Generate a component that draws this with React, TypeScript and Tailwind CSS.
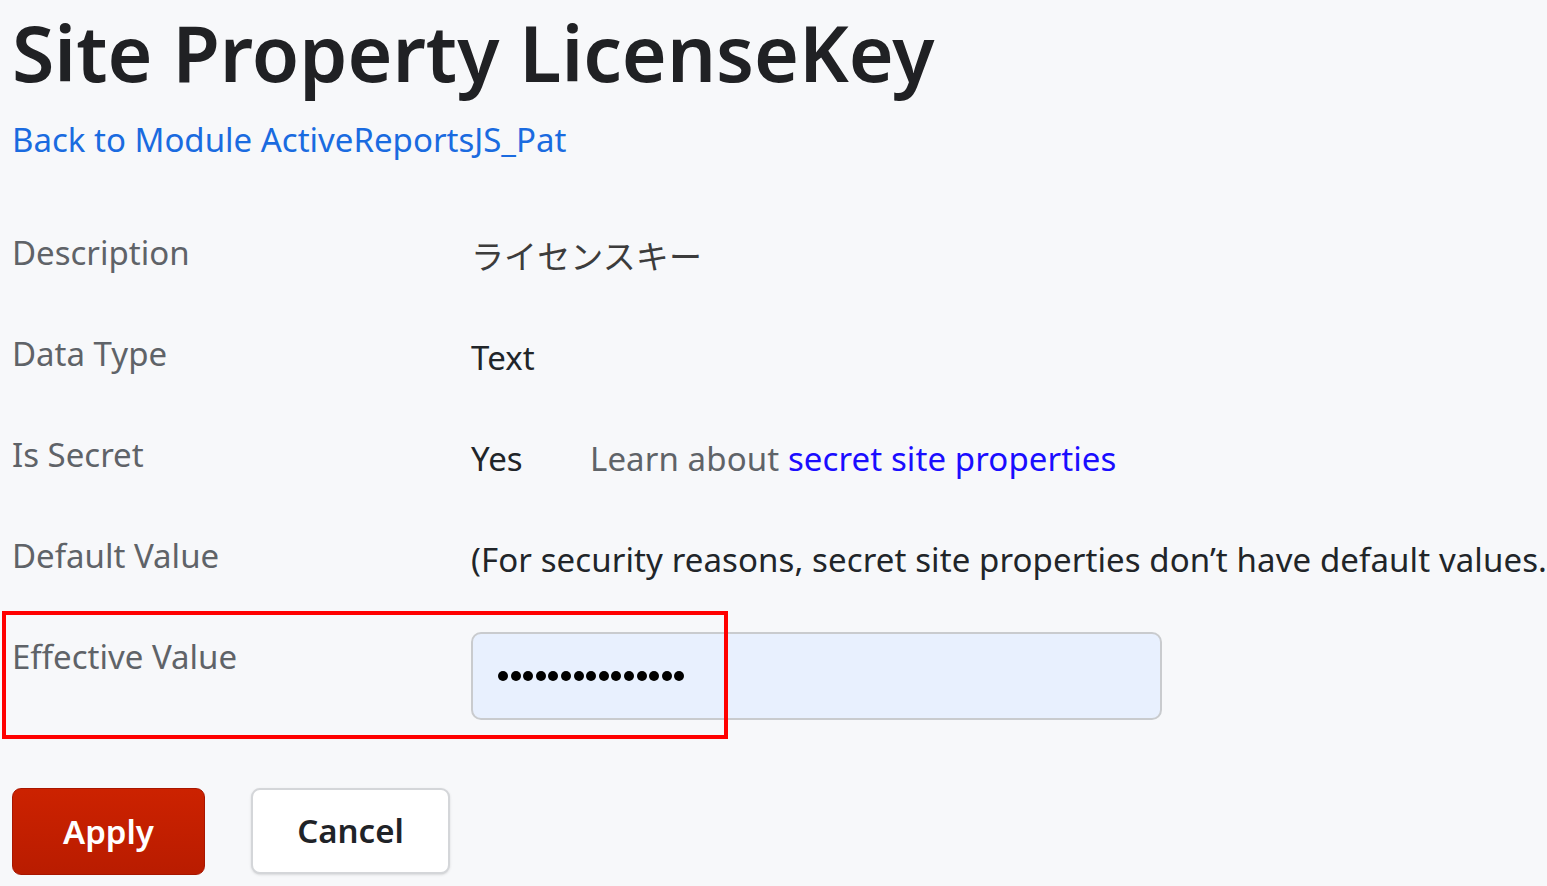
import React from "react";

const rows = [
  { label: "Description", value: <span className="text-[#3c3c3c]">ライセンスキー</span> },
  { label: "Data Type", value: <span>Text</span> },
  {
    label: "Is Secret",
    value: (
      <span className="flex">
        <span className="w-[119px]">Yes</span>
        <span className="text-[#5f6368]">
          Learn about <a className="text-[#1a0dff]">secret site properties</a>
        </span>
      </span>
    ),
  },
  {
    label: "Default Value",
    value: <span className="whitespace-nowrap">(For security reasons, secret site properties don’t have default values.)</span>,
  },
];

export default function App() {
  return (
    <div
      className="min-h-screen w-full overflow-hidden bg-[#f7f8fa] pl-[12px] text-[#212529]"
      style={{ fontFamily: '"Noto Sans", "Noto Sans CJK JP", sans-serif' }}
    >
      <h1 className="pt-[8px] text-[77px] leading-[90px] font-semibold text-[#202124] whitespace-nowrap">
        Site Property LicenseKey
      </h1>
      <a className="block mt-[20px] text-[33px] leading-[44px] text-[#1a6be0]">Back to Module ActiveReportsJS_Pat</a>

      <div className="mt-[71px] flex flex-col">
        {rows.map((r) => (
          <div key={r.label} className="flex h-[101px] text-[33px] leading-[40px]">
            <div className="w-[459px] shrink-0 text-[#5f6368]">{r.label}</div>
            <div className="mt-[4px] whitespace-nowrap text-[#212529] tracking-[0.1px]">{r.value}</div>
          </div>
        ))}

        <div className="relative flex h-[151px]">
          <div className="w-[459px] shrink-0 text-[33px] leading-[40px] text-[#5f6368]">Effective Value</div>
          <div className="mt-[-5px] flex h-[88px] w-[691px] shrink-0 items-center rounded-[10px] border-2 border-[#c9cbce] bg-[#e8f0fe] pl-[25px]">
            <div className="flex gap-[2.6px]">
              {Array.from({ length: 15 }).map((_, i) => (
                <div key={i} className="h-[10px] w-[10px] rounded-full bg-black" />
              ))}
            </div>
          </div>
          <div className="pointer-events-none absolute left-[-10px] top-[-26px] h-[128px] w-[726px] border-4 border-[#ff0000]" />
        </div>

        <div className="flex gap-[46px]">
          <button className="h-[87px] w-[193px] rounded-[9px] border border-[#a81600] bg-gradient-to-b from-[#cc2200] to-[#b91c00] text-[33px] font-semibold text-white">
            Apply
          </button>
          <button className="h-[86px] w-[199px] rounded-[9px] border-2 border-[#d4d6d9] bg-white text-[33px] font-semibold text-[#1f2328] shadow-sm">
            Cancel
          </button>
        </div>
      </div>
    </div>
  );
}
